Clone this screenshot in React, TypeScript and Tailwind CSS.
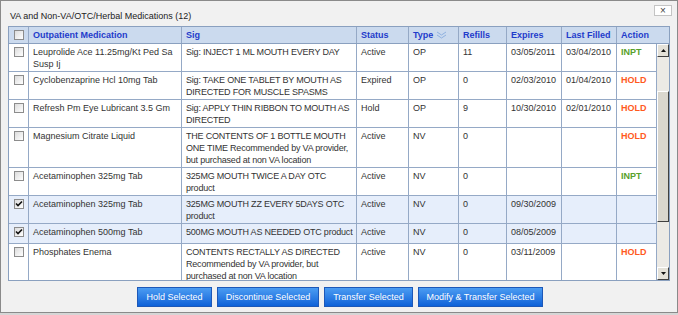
import type { ReactNode } from 'react'

type Row = {
  checked: boolean
  med: string[]
  sig: string[]
  status: string
  type: string
  refills: string
  expires: string
  lastFilled: string
  action: '' | 'INPT' | 'HOLD'
}

const rows: Row[] = [
  { checked: false, med: ['Leuprolide Ace 11.25mg/Kt Ped Sa', 'Susp Ij'], sig: ['Sig: INJECT 1 ML MOUTH EVERY DAY'], status: 'Active', type: 'OP', refills: '11', expires: '03/05/2011', lastFilled: '03/04/2010', action: 'INPT' },
  { checked: false, med: ['Cyclobenzaprine Hcl 10mg Tab'], sig: ['Sig: TAKE ONE TABLET BY MOUTH AS', 'DIRECTED FOR MUSCLE SPASMS'], status: 'Expired', type: 'OP', refills: '0', expires: '02/03/2010', lastFilled: '01/04/2010', action: 'HOLD' },
  { checked: false, med: ['Refresh Pm Eye Lubricant 3.5 Gm'], sig: ['Sig: APPLY THIN RIBBON TO MOUTH AS', 'DIRECTED'], status: 'Hold', type: 'OP', refills: '9', expires: '10/30/2010', lastFilled: '02/01/2010', action: 'HOLD' },
  { checked: false, med: ['Magnesium Citrate Liquid'], sig: ['THE CONTENTS OF 1 BOTTLE MOUTH', 'ONE TIME Recommended by VA provider,', 'but purchased at non VA location'], status: 'Active', type: 'NV', refills: '0', expires: '', lastFilled: '', action: 'HOLD' },
  { checked: false, med: ['Acetaminophen 325mg Tab'], sig: ['325MG MOUTH TWICE A DAY OTC', 'product'], status: 'Active', type: 'NV', refills: '0', expires: '', lastFilled: '', action: 'INPT' },
  { checked: true, med: ['Acetaminophen 325mg Tab'], sig: ['325MG MOUTH ZZ EVERY 5DAYS OTC', 'product'], status: 'Active', type: 'NV', refills: '0', expires: '09/30/2009', lastFilled: '', action: '' },
  { checked: true, med: ['Acetaminophen 500mg Tab'], sig: ['500MG MOUTH AS NEEDED OTC product'], status: 'Active', type: 'NV', refills: '0', expires: '08/05/2009', lastFilled: '', action: '' },
  { checked: false, med: ['Phosphates Enema'], sig: ['CONTENTS RECTALLY AS DIRECTED', 'Recommended by VA provider, but', 'purchased at non VA location'], status: 'Active', type: 'NV', refills: '0', expires: '03/11/2009', lastFilled: '', action: 'HOLD' },
]

const buttons = [
  { label: 'Hold Selected', w: 'w-[75px]' },
  { label: 'Discontinue Selected', w: 'w-[102px]' },
  { label: 'Transfer Selected', w: 'w-[89px]' },
  { label: 'Modify & Transfer Selected', w: 'w-[125px]' },
]

function Checkbox({ checked }: { checked?: boolean }) {
  return (
    <span className="flex h-[10px] w-[10px] items-center justify-center border border-[#8c8c8c] bg-linear-to-br from-[#dcdcdc] to-white">
      {checked && (
        <svg width="8" height="8" viewBox="0 0 8 8">
          <path d="M1 3.5 L3 5.5 L7 1.5" fill="none" stroke="#111" strokeWidth="1.6" />
        </svg>
      )}
    </span>
  )
}

function Cell({ children, last, tight }: { children?: ReactNode; last?: boolean; tight?: boolean }) {
  return (
    <div
      className={`overflow-hidden whitespace-nowrap pl-[4px] pt-[2px] pb-[1px] ${tight ? 'tracking-[-0.2px]' : ''} ${last ? '' : 'border-r border-[#95a9c6]'}`}
    >
      {children}
    </div>
  )
}

function Lines({ lines }: { lines: string[] }) {
  return (
    <>
      {lines.map((l, i) => (
        <div key={i}>{l}</div>
      ))}
    </>
  )
}

const headCols = 'grid-cols-[20px_153px_175px_52px_50px_48px_55px_55px_52px]'
const bodyCols = 'grid-cols-[20px_153px_175px_52px_50px_48px_55px_55px_40px]'

function ScrollArrow({ down }: { down?: boolean }) {
  return (
    <div className="flex h-[13px] w-[12px] items-center justify-center border border-t-white border-l-white border-r-[#404040] border-b-[#404040] bg-[#e4e1d8]">
      <svg width="5" height="3" viewBox="0 0 5 3">
        <path d={down ? 'M0 0 H5 L2.5 3 Z' : 'M0 3 H5 L2.5 0 Z'} fill="#111" />
      </svg>
    </div>
  )
}

export default function App() {
  return (
    <div className="h-[315px] w-[678px] bg-[#d6d6d6] font-['Liberation_Sans',Arial,sans-serif] text-[9px] leading-[12px] text-[#333]">
      <div className="flex h-[313px] flex-col border border-[#8a8a8a] bg-[#f1f1f1]">
        {/* Title bar */}
        <div className="flex h-[25px] items-start justify-between">
          <span className="ml-[9px] mt-[9px] text-[9px] text-[#222]">VA and Non-VA/OTC/Herbal Medications (12)</span>
          <button className="mr-[5px] mt-[4px] flex h-[11px] w-[18px] items-center justify-center border border-[#c4c4c4] bg-white text-[10px] leading-none text-[#444]">
            ×
          </button>
        </div>

        {/* Table */}
        <div className="ml-[7px] flex h-[255px] w-[662px] flex-col border border-[#8aa0bf] bg-white">
          <div className={`grid ${headCols} h-[17px] border-b border-[#8aa0bf] bg-[#cbdaee] font-bold text-[#1f3ccb]`}>
            <div className="flex items-center justify-center border-r border-[#95a9c6]">
              <Checkbox />
            </div>
            {['Outpatient Medication', 'Sig', 'Status'].map((h) => (
              <div key={h} className="flex items-center border-r border-[#95a9c6] pl-[4px]">{h}</div>
            ))}
            <div className="flex items-center gap-[3px] border-r border-[#95a9c6] pl-[4px]">
              Type
              <svg width="11" height="8" viewBox="0 0 11 8">
                <path d="M1 1 L5.5 4 L10 1 M1 4 L5.5 7 L10 4" fill="none" stroke="#8fb1e0" strokeWidth="1" />
              </svg>
            </div>
            {['Refills', 'Expires', 'Last Filled'].map((h) => (
              <div key={h} className="flex items-center border-r border-[#95a9c6] pl-[4px]">{h}</div>
            ))}
            <div className="flex items-center pl-[4px]">Action</div>
          </div>

          <div className="flex min-h-0 flex-1">
            <div className="w-[648px] overflow-hidden border-r border-[#95a9c6]">
              {rows.map((r, i) => (
                <div
                  key={i}
                  className={`grid ${bodyCols} min-h-[20px] border-b border-[#95a9c6] ${r.checked ? 'bg-[#e6eefb]' : 'bg-white'}`}
                >
                  <div className="flex justify-center border-r border-[#95a9c6] pt-[3px]">
                    <Checkbox checked={r.checked} />
                  </div>
                  <Cell><Lines lines={r.med} /></Cell>
                  <Cell tight><Lines lines={r.sig} /></Cell>
                  <Cell>{r.status}</Cell>
                  <Cell>{r.type}</Cell>
                  <Cell>{r.refills}</Cell>
                  <Cell>{r.expires}</Cell>
                  <Cell>{r.lastFilled}</Cell>
                  <Cell last>
                    {r.action && (
                      <span className={`font-bold ${r.action === 'HOLD' ? 'text-[#ff5a1e]' : 'text-[#58a02c]'}`}>{r.action}</span>
                    )}
                  </Cell>
                </div>
              ))}
            </div>

            {/* Scrollbar */}
            <div className="flex w-[12px] flex-col bg-[#eceae5]">
              <ScrollArrow />
              <div className="h-[34px]" />
              <div className="h-[131px] border border-t-white border-l-white border-r-[#404040] border-b-[#404040] bg-[#dad7ce]" />
              <div className="flex-1" />
              <ScrollArrow down />
            </div>
          </div>
        </div>

        {/* Buttons */}
        <div className="mt-[6px] flex justify-center gap-[5px] pl-[2px]">
          {buttons.map((b) => (
            <button
              key={b.label}
              className={`h-[20px] ${b.w} border border-[#1d58b8] bg-linear-to-b from-[#4b9cf2] to-[#0d61d8] text-[9px] text-white`}
            >
              {b.label}
            </button>
          ))}
        </div>
      </div>
    </div>
  )
}
